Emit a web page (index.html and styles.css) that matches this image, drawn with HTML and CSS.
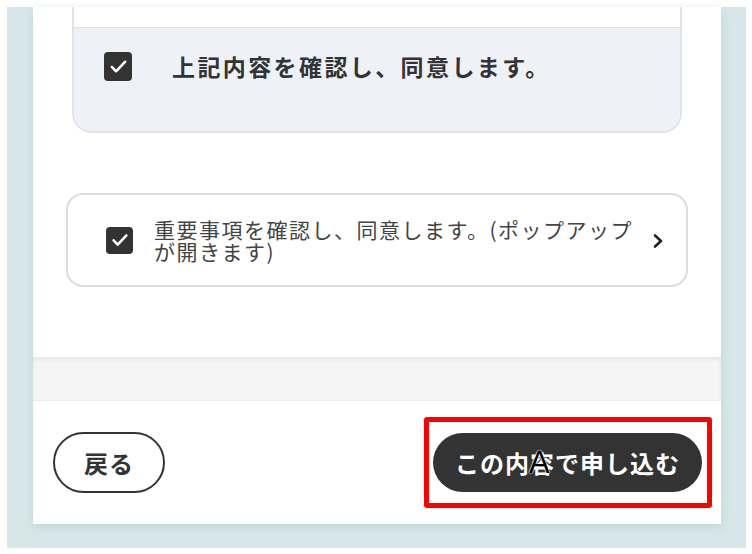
FILE: index.html
```html
<!DOCTYPE html>
<html lang="ja">
<head>
<meta charset="utf-8">
<link rel="stylesheet" href="styles.css">
</head>
<body>
<div class="frame">
  <div class="panel">
    <div class="scroll">
      <div class="summary-card">
        <div class="summary-top"></div>
        <div class="summary-agree">
          <span class="check big">
            <svg viewBox="0 0 24 24" width="23" height="23"><path d="M5 12.5l4.5 4.5L19 7" fill="none" stroke="#fff" stroke-width="2.6" stroke-linecap="round" stroke-linejoin="round"/></svg>
          </span>
          <span class="agree-text">上記内容を確認し、同意します。</span>
        </div>
      </div>
      <div class="notice-card">
        <span class="check">
          <svg viewBox="0 0 24 24" width="22" height="22"><path d="M5 12.5l4.5 4.5L19 7" fill="none" stroke="#fff" stroke-width="2.8" stroke-linecap="round" stroke-linejoin="round"/></svg>
        </span>
        <span class="notice-text">重要事項を確認し、同意します。(ポップアップが開きます)</span>
        <svg class="chev" viewBox="0 0 12 16" width="12" height="16"><path d="M3 2.5l6 5.5-6 5.5" fill="none" stroke="#222" stroke-width="2.6" stroke-linecap="round" stroke-linejoin="round"/></svg>
      </div>
    </div>
    <div class="band"></div>
    <div class="footer">
      <button class="btn back">戻る</button>
      <button class="btn submit">この内容で申し込む</button>
      <div class="highlight"></div>
      <span class="marker">A</span>
    </div>
  </div>
</div>
</body>
</html>
```
FILE: styles.css
```css
* { box-sizing: border-box; }
html, body { margin: 0; padding: 0; background: #fff; }
body {
  font-family: "Noto Sans CJK JP", "Noto Sans", sans-serif;
  width: 752px;
  height: 554px;
  overflow: hidden;
}
.frame {
  margin: 7px 6px 0 7px;
  height: 541px;
  background: #d7e7e9;
  padding: 0 25px 24px 26px;
}
.panel {
  position: relative;
  background: #fff;
  height: 517px;
  display: flex;
  flex-direction: column;
  box-shadow: 0 3px 10px rgba(150, 180, 185, 0.35);
}
.scroll {
  height: 350px;
  padding: 0 39px;
}
.summary-card {
  border: 2px solid #e0e3e6;
  border-top: none;
  border-radius: 0 0 20px 20px;
  overflow: hidden;
  height: 126px;
  display: flex;
  flex-direction: column;
}
.summary-top {
  height: 21px;
  background: #fff;
  border-bottom: 1.5px solid #dfe2e5;
}
.summary-agree {
  flex: 1;
  background: #eef2f7;
  display: flex;
  align-items: flex-start;
  padding: 24px 0 0 30px;
}
.check {
  flex: none;
  width: 27px;
  height: 27px;
  background: #333;
  border-radius: 4px;
  display: flex;
  align-items: center;
  justify-content: center;
}
.check.big { width: 28px; height: 29px; }
.agree-text {
  margin-left: 40px;
  font-size: 23px;
  font-weight: 700;
  color: #333;
  line-height: 29px;
  letter-spacing: 2.4px;
}
.notice-card {
  margin: 60px -6px 0;
  height: 94px;
  border: 2px solid #dcdcdc;
  border-radius: 17px;
  display: flex;
  align-items: center;
  padding: 0 22px 0 38px;
}
.notice-text {
  margin-left: 21px;
  flex: 1;
  font-size: 21px;
  line-height: 22px;
  letter-spacing: 1.5px;
  color: #444;
  padding-right: 12px;
}
.chev { flex: none; margin-top: 2px; }
.band {
  height: 44px;
  background: #f5f5f5;
  box-shadow: inset 0 3px 4px rgba(0,0,0,0.06);
  border-bottom: 1px solid #ececec;
}
.footer {
  position: relative;
  flex: 1;
  display: flex;
  justify-content: space-between;
  align-items: flex-start;
  padding: 31px 19px 0 20px;
}
.btn {
  font-family: "Noto Sans CJK JP", sans-serif;
  font-weight: 700;
  font-size: 24px;
  border-radius: 31px;
  cursor: pointer;
  letter-spacing: 1px;
}
.back {
  width: 112px;
  height: 61px;
  background: #fff;
  border: 2px solid #333;
  color: #333;
}
.submit {
  margin-top: 1px;
  width: 269px;
  height: 59px;
  background: #333;
  border: none;
  color: #fff;
}
.highlight {
  position: absolute;
  left: 391px;
  top: 16px;
  width: 288px;
  height: 91px;
  border: 5px solid #ff0000;
  border-radius: 3px;
  pointer-events: none;
}
.marker {
  position: absolute;
  left: 496px;
  top: 46px;
  font-family: "Liberation Sans", sans-serif;
  font-size: 31px;
  line-height: 31px;
  color: #000;
  text-shadow: 0 0 1px #fff, 0 0 1px #fff, 0 0 2px #fff;
}
```
